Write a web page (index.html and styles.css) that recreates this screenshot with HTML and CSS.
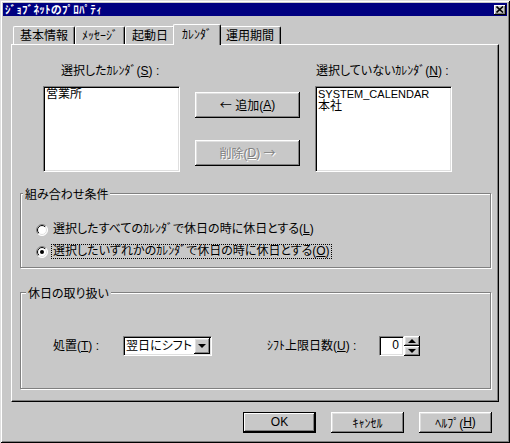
FILE: index.html
```html
<!DOCTYPE html>
<html lang="ja">
<head>
<meta charset="utf-8">
<title>ｼﾞｮﾌﾞﾈｯﾄのﾌﾟﾛﾊﾟﾃｨ</title>
<link rel="stylesheet" href="styles.css">
</head>
<body>
<div class="window">
  <div class="titlebar">
    <span class="title">ｼﾞｮﾌﾞﾈｯﾄのﾌﾟﾛﾊﾟﾃｨ</span>
    <span class="close-btn">
      <svg width="8" height="7" viewBox="0 0 8 7"><path d="M0.5 0.5 L7 6.5 M7 0.5 L0.5 6.5" stroke="#000" stroke-width="1.6" fill="none"/></svg>
    </span>
  </div>
  <div class="content">
    <div class="tabs">
      <div class="tab">基本情報</div>
      <div class="tab">ﾒｯｾｰｼﾞ</div>
      <div class="tab">起動日</div>
      <div class="tab tab-active">ｶﾚﾝﾀﾞ</div>
      <div class="tab">運用期間</div>
    </div>
    <div class="panel">
      <div class="lists">
        <div class="list-col">
          <div class="list-label list-label-left">選択したｶﾚﾝﾀﾞ(<u>S</u>) :</div>
          <div class="listbox">
            <div class="list-item">営業所</div>
          </div>
        </div>
        <div class="move-col">
          <div class="btn btn-move"><span class="arrow">←</span>&nbsp;追加(<u>A</u>)</div>
          <div class="btn btn-move btn-disabled">削除(<u>D</u>)&nbsp;<span class="arrow">→</span></div>
        </div>
        <div class="list-col list-col-right">
          <div class="list-label">選択していないｶﾚﾝﾀﾞ(<u>N</u>) :</div>
          <div class="listbox">
            <div class="list-item list-item-latin">SYSTEM_CALENDAR</div>
            <div class="list-item">本社</div>
          </div>
        </div>
      </div>

      <div class="group group-combine">
        <div class="group-title group-title-combine">組み合わせ条件</div>
        <div class="radio-row radio-row-first">
          <svg class="radio" width="12" height="12" viewBox="0 0 12 12">
            <defs>
              <linearGradient id="ro" x1="0" y1="0" x2="1" y2="1"><stop offset="0.5" stop-color="#808080"/><stop offset="0.5" stop-color="#ffffff"/></linearGradient>
              <linearGradient id="ri" x1="0" y1="0" x2="1" y2="1"><stop offset="0.5" stop-color="#000000"/><stop offset="0.5" stop-color="#dfdfdf"/></linearGradient>
            </defs>
            <circle cx="6" cy="6" r="5.5" fill="#fff" stroke="url(#ro)" stroke-width="1"/>
            <circle cx="6" cy="6" r="4.5" fill="#fff" stroke="url(#ri)" stroke-width="1"/>
          </svg>
          <span class="radio-label">選択したすべてのｶﾚﾝﾀﾞで休日の時に休日とする(<u>L</u>)</span>
        </div>
        <div class="radio-row radio-row-second">
          <svg class="radio" width="12" height="12" viewBox="0 0 12 12">
            <circle cx="6" cy="6" r="5.5" fill="#fff" stroke="url(#ro)" stroke-width="1"/>
            <circle cx="6" cy="6" r="4.5" fill="#fff" stroke="url(#ri)" stroke-width="1"/>
            <circle cx="6" cy="6" r="2" fill="#000"/>
          </svg>
          <span class="radio-label radio-label-focus">選択したいずれかのｶﾚﾝﾀﾞで休日の時に休日とする(<u>O</u>)</span>
        </div>
      </div>

      <div class="group group-holiday">
        <div class="group-title group-title-holiday">休日の取り扱い</div>
        <div class="field-row">
          <span class="field-label field-label-action">処置(<u>T</u>) :</span>
          <div class="combo">
            <span class="combo-text">翌日にシフト</span>
            <span class="combo-btn"><span class="tri-down"></span></span>
          </div>
          <span class="field-label field-label-limit">ｼﾌﾄ上限日数(<u>U</u>) :</span>
          <div class="spin">
            <div class="spin-edit">0</div>
            <div class="spin-btns">
              <span class="spin-btn"><span class="tri-up"></span></span>
              <span class="spin-btn"><span class="tri-down"></span></span>
            </div>
          </div>
        </div>
      </div>
    </div>
  </div>
  <div class="buttons">
    <div class="btn btn-dialog btn-default">OK</div>
    <div class="btn btn-dialog">ｷｬﾝｾﾙ</div>
    <div class="btn btn-dialog">ﾍﾙﾌﾟ(<u>H</u>)</div>
  </div>
</div>
</body>
</html>
```

FILE: styles.css
```css
html, body {
  margin: 0;
  padding: 0;
  background: #c8c8c8;
}

body {
  font-family: "Liberation Sans", "Noto Sans CJK JP", sans-serif;
  font-size: 12px;
  color: #000;
  font-feature-settings: "palt";
}

u {
  text-decoration: underline;
  text-underline-offset: 1px;
}

.arrow {
  font-family: "Noto Sans CJK JP", sans-serif;
  font-feature-settings: normal;
}

.window {
  box-sizing: border-box;
  width: 510px;
  height: 443px;
  padding: 3px;
  background: #c8c8c8;
  box-shadow: inset 1px 1px #dfdfdf, inset -1px -1px #000, inset 2px 2px #fff, inset -2px -2px #808080;
  display: flex;
  flex-direction: column;
}

/* Title bar */
.titlebar {
  height: 13px;
  background: #000080;
  display: flex;
  align-items: center;
  justify-content: space-between;
  padding: 0 1px 0 2px;
}

.title {
  color: #fff;
  font-weight: bold;
  font-size: 11px;
  line-height: 13px;
  letter-spacing: 0.3px;
  font-family: "Noto Sans CJK JP", sans-serif;
}

.close-btn {
  box-sizing: border-box;
  width: 12px;
  height: 10px;
  background: #c8c8c8;
  box-shadow: inset -1px -1px #000, inset 1px 1px #fff, inset -2px -2px #808080;
  display: flex;
  align-items: center;
  justify-content: center;
  padding: 0 1px 1px 0;
}

.close-btn svg {
  display: block;
}

/* Tabs */
.content {
  padding: 8px 8px 0 8px;
}

.tabs {
  height: 20px;
  display: flex;
  align-items: flex-end;
  padding-left: 2px;
}

.tab {
  box-sizing: border-box;
  height: 18px;
  padding: 2px 6px 0 6px;
  line-height: 15px;
  border-top: 1px solid #fff;
  border-left: 1px solid #fff;
  border-right: 1px solid #000;
  border-radius: 2px 2px 0 0;
  box-shadow: inset -1px 0 #808080;
  background: #c8c8c8;
  white-space: nowrap;
}

.tab-active {
  height: 21px;
  padding: 3px 8px 0 8px;
  margin: 0 -2px -1px -2px;
  position: relative;
  z-index: 1;
  line-height: 15px;
}

/* Panel */
.panel {
  box-sizing: border-box;
  height: 358px;
  border-top: 1px solid #fff;
  border-left: 1px solid #fff;
  border-right: 1px solid #000;
  border-bottom: 1px solid #000;
  box-shadow: inset -1px -1px #808080;
  padding-top: 19px;
}

.lists {
  display: flex;
  align-items: flex-start;
  padding-left: 31px;
}

.list-col {
  width: 137px;
}

.list-col-right {
  margin-left: 15px;
}

.list-label {
  line-height: 14px;
  height: 14px;
  margin-bottom: 8px;
  padding-left: 1px;
  white-space: nowrap;
}

.list-label-left {
  padding-left: 18px;
}

.listbox {
  box-sizing: border-box;
  height: 86px;
  background: #fff;
  border: 1px solid;
  border-color: #808080 #fff #fff #808080;
  box-shadow: inset 1px 1px #000, inset -1px -1px #dfdfdf;
  padding: 1px 2px;
  overflow: hidden;
}

.list-item {
  line-height: 12px;
  height: 12px;
  white-space: nowrap;
}

.list-item-latin {
  font-size: 11px;
}

.move-col {
  margin-left: 15px;
  width: 105px;
  padding-top: 28px;
  display: flex;
  flex-direction: column;
  gap: 22px;
}

/* Buttons */
.btn {
  box-sizing: border-box;
  background: #c8c8c8;
  box-shadow: inset -1px -1px #000, inset 1px 1px #fff, inset -2px -2px #808080, inset 2px 2px #dfdfdf;
  display: flex;
  align-items: center;
  justify-content: center;
  white-space: nowrap;
}

.btn-move {
  height: 26px;
  padding-bottom: 1px;
}

.btn-disabled {
  color: #808080;
  text-shadow: 1px 1px 0 #fff;
}

.btn-dialog {
  width: 73px;
  height: 21px;
  padding-bottom: 1px;
}

.btn-default {
  border: 1px solid #000;
  box-shadow: inset -1px -1px #000, inset 1px 1px #fff, inset -2px -2px #808080;
}

.buttons {
  display: flex;
  justify-content: flex-end;
  gap: 15px;
  padding-right: 15px;
  margin-top: 10px;
}

/* Group boxes */
.group {
  box-sizing: border-box;
  width: 471px;
  margin-left: 8px;
  border: 1px solid #808080;
  box-shadow: inset 1px 1px #fff, 1px 1px 0 #fff;
}

.group-combine {
  height: 75px;
  margin-top: 21px;
}

.group-holiday {
  height: 97px;
  margin-top: 24px;
}

.group-title {
  display: inline-block;
  vertical-align: top;
  background: #c8c8c8;
  line-height: 14px;
  height: 14px;
  margin-top: -7px;
  padding: 0 2px;
  font-family: "Noto Sans CJK JP", sans-serif;
}

.group-title-combine {
  margin-left: 2px;
}

.group-title-holiday {
  margin-left: 5px;
}

/* Radios */
.radio-row {
  display: flex;
  align-items: center;
  padding-left: 15px;
  height: 15px;
}

.radio-row-first {
  margin-top: 14px;
}

.radio-row-second {
  margin-top: 7px;
}

.radio {
  display: block;
  flex: none;
  margin-right: 3px;
}

.radio-label {
  box-sizing: border-box;
  height: 15px;
  line-height: 13px;
  padding: 0 1px;
  border: 1px dotted transparent;
  white-space: nowrap;
}

.radio-label-focus {
  border-color: #000;
}

/* Field row */
.field-row {
  display: flex;
  align-items: center;
  margin-top: 29px;
  padding-left: 32px;
}

.field-label {
  white-space: nowrap;
  line-height: 14px;
}

.field-label-action {
  width: 70px;
}

.field-label-limit {
  width: 112px;
  margin-left: 55px;
}

.combo {
  box-sizing: border-box;
  width: 89px;
  height: 20px;
  background: #fff;
  border: 1px solid;
  border-color: #808080 #fff #fff #808080;
  box-shadow: inset 1px 1px #000, inset -1px -1px #dfdfdf;
  display: flex;
  align-items: center;
  justify-content: space-between;
  padding: 1px 1px 1px 2px;
}

.combo-text {
  line-height: 14px;
  white-space: nowrap;
}

.combo-btn {
  box-sizing: border-box;
  width: 16px;
  height: 16px;
  background: #c8c8c8;
  box-shadow: inset -1px -1px #000, inset 1px 1px #fff, inset -2px -2px #808080, inset 2px 2px #dfdfdf;
  display: flex;
  align-items: center;
  justify-content: center;
}

.tri-down {
  width: 0;
  height: 0;
  border-left: 4px solid transparent;
  border-right: 4px solid transparent;
  border-top: 4px solid #000;
}

.tri-up {
  width: 0;
  height: 0;
  border-left: 4px solid transparent;
  border-right: 4px solid transparent;
  border-bottom: 4px solid #000;
}

.spin {
  display: flex;
  height: 20px;
}

.spin-edit {
  box-sizing: border-box;
  width: 25px;
  height: 20px;
  background: #fff;
  border: 1px solid;
  border-color: #808080 #fff #fff #808080;
  box-shadow: inset 1px 1px #000, inset -1px -1px #dfdfdf;
  text-align: right;
  padding-right: 4px;
  line-height: 17px;
}

.spin-btns {
  width: 16px;
  height: 20px;
  display: flex;
  flex-direction: column;
}

.spin-btn {
  box-sizing: border-box;
  height: 10px;
  background: #c8c8c8;
  box-shadow: inset -1px -1px #000, inset 1px 1px #fff, inset -2px -2px #808080, inset 2px 2px #dfdfdf;
  display: flex;
  align-items: center;
  justify-content: center;
}
```
